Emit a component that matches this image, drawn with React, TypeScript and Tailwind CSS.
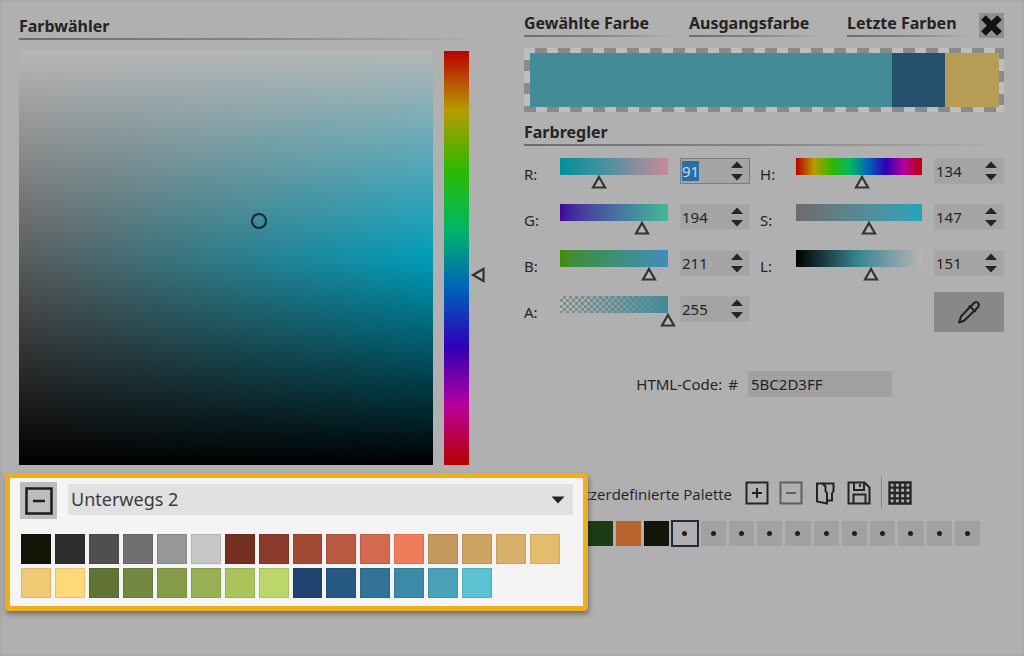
import { clsx } from 'clsx';
import type { ReactNode } from 'react';
import { useEffect, useRef, useState } from 'react';

const paletteColors = [
  '#141407', '#2d2d2d', '#4e4e4e', '#707070', '#979797', '#c6c6c6',
  '#732f21', '#8b3b2b', '#a14b36', '#b85a42', '#d26a50', '#f17c5b',
  '#c2985d', '#cda464', '#d8b06b', '#e4bc6f', '#f0ca75', '#ffd877',
  '#627336', '#748741', '#879c4b', '#99b055', '#aac35d', '#bdd669',
  '#20446f', '#265a84', '#327296', '#3d89a8', '#4aa1ba', '#5bc2d2',
];

const customColors: (string | null)[] = [
  '#1c3a1a', '#1c3a1a', '#1d3c15', '#b9642f', '#13150a',
  null, null, null, null, null, null, null, null, null, null, null,
];

const Heading = ({
  children,
  className,
}: {
  children: ReactNode;
  className?: string;
}) => (
  <h2 className={clsx('text-base font-bold leading-6', className)}>
    {children}
    <span className="block h-[2px] bg-linear-to-r from-[#6c6c6c] via-[#858585] to-[#b0b0b0]" />
  </h2>
);

const Slider = ({
  label,
  value,
  onChange,
  barClassName,
  autoSelect,
}: {
  label: string;
  value: number;
  onChange: (value: number) => void;
  barClassName: string;
  autoSelect?: boolean;
}) => {
  const inputRef = useRef<HTMLInputElement>(null);

  useEffect(() => {
    if (autoSelect) {
      inputRef.current?.focus();
      inputRef.current?.select();
    }
  }, [autoSelect]);

  const update = (next: number) => {
    onChange(Math.min(255, Math.max(0, next || 0)));
  };

  return (
    <div className="flex h-[26px] items-start">
      <label htmlFor={`value-${label}`} className="w-9 pt-1 leading-6">
        {label}:
      </label>
      <div className="relative mr-3 h-[26px] flex-1">
        <div className={clsx('h-[17px]', barClassName)} />
        <svg
          className="absolute top-4 h-4 w-[18px] -translate-x-1/2"
          style={{ left: `${(value / 255) * 100}%` }}
          viewBox="0 0 18 16"
        >
          <path
            d="M9 3 15 13.500H3z"
            fill="#b8b8b8"
            stroke="#333"
            strokeWidth="2.200"
          />
        </svg>
        <input
          type="range"
          aria-label={label}
          min={0}
          max={255}
          value={value}
          onChange={(e) => update(Number(e.target.value))}
          className="absolute inset-0 h-full w-full cursor-pointer opacity-0"
        />
      </div>
      <div
        className={clsx(
          'flex h-[26px] w-[70px] items-center border bg-[#a4a4a4]',
          autoSelect ? 'border-[#7c7c7c]' : 'border-[#a8a8a8]',
        )}
      >
        <input
          ref={inputRef}
          id={`value-${label}`}
          type="text"
          inputMode="numeric"
          value={value}
          onChange={(e) => update(Number(e.target.value))}
          className="h-[22px] w-0 flex-1 pb-px pl-px leading-5 outline-none selection:bg-[#286fa8] selection:text-[#c8d8e4]"
        />
        <div className="mr-[6px] flex flex-col gap-1">
          <button
            type="button"
            aria-label={`${label} +`}
            onClick={() => update(value + 1)}
          >
            <svg className="block h-2 w-3" viewBox="0 0 12 8">
              <path d="M6 .5 12 7H0z" fill="#242424" />
            </svg>
          </button>
          <button
            type="button"
            aria-label={`${label} -`}
            onClick={() => update(value - 1)}
          >
            <svg className="block h-2 w-3" viewBox="0 0 12 8">
              <path d="M6 7.500 12 1H0z" fill="#242424" />
            </svg>
          </button>
        </div>
      </div>
    </div>
  );
};

const IconButton = ({
  label,
  children,
  className,
}: {
  label: string;
  children: ReactNode;
  className?: string;
}) => (
  <button type="button" aria-label={label} className={clsx('h-6 w-6', className)}>
    <svg
      className="h-6 w-6"
      viewBox="0 0 24 24"
      fill="none"
      stroke="currentColor"
      strokeWidth="2"
    >
      {children}
    </svg>
  </button>
);

const ColorField = () => {
  const [hue, setHue] = useState(54);

  return (
    <section>
      <Heading className="pt-[3px]">Farbwähler</Heading>
      <div className="mt-[11px] flex">
        <div className="relative aspect-square flex-1 bg-[linear-gradient(to_bottom,#b6b6b6,#b6b6b600_50%,#00000000_50%,#000),linear-gradient(to_right,#5c5c5c,#009cb9)]">
          <span className="absolute left-[58%] top-[41%] h-4 w-4 -translate-x-1/2 -translate-y-1/2 rounded-full border-2 border-[#0d2a33]" />
        </div>
        <div className="relative ml-[11px] mr-[15px] w-[25px] bg-[linear-gradient(to_bottom,#b80000,#b89c00,#2fb800,#00b866,#0064b8,#2d00b8,#b8009c,#b80000)]">
          <svg
            className="absolute left-[26px] h-[18px] w-4 -translate-y-1/2"
            style={{ top: `${hue}%` }}
            viewBox="0 0 16 18"
          >
            <path
              d="M3 9 13.500 3v12z"
              fill="#b8b8b8"
              stroke="#333"
              strokeWidth="2.200"
            />
          </svg>
          <input
            type="range"
            aria-label="Farbton"
            min={0}
            max={100}
            value={hue}
            onChange={(e) => setHue(Number(e.target.value))}
            className="absolute inset-0 h-full w-full opacity-0 [direction:ltr] [writing-mode:vertical-lr]"
          />
        </div>
      </div>
    </section>
  );
};

const ColorSettings = () => {
  const [values, setValues] = useState({
    R: 91, G: 194, B: 211, A: 255, H: 134, S: 147, L: 151,
  });
  const [code, setCode] = useState('5BC2D3FF');

  const bind = (label: keyof typeof values) => ({
    label,
    value: values[label],
    onChange: (value: number) => setValues((v) => ({ ...v, [label]: value })),
  });

  return (
    <section>
      <div className="flex items-start">
        <Heading className="w-[150px]">Gewählte Farbe</Heading>
        <Heading className="ml-[15px] w-[132px]">Ausgangsfarbe</Heading>
        <Heading className="ml-[26px] w-[122px]">Letzte Farben</Heading>
        <button
          type="button"
          aria-label="Schließen"
          className="ml-auto mt-[2px] h-[25px] w-[25px] bg-[#8f8f8f]"
        >
          <svg className="h-[25px] w-[25px]" viewBox="0 0 25 25">
            <path
              d="M4.500 4.500 20.500 20.500M20.500 4.500 4.500 20.500"
              stroke="#121212"
              strokeWidth="6.500"
            />
          </svg>
        </button>
      </div>

      <div className="mt-[10px] flex h-16 bg-[conic-gradient(#8a8a8a_25%,#bebebe_0_50%,#8a8a8a_0_75%,#bebebe_0)] bg-size-[23px_23px] py-[5px] pl-[6px] pr-[5px]">
        <div className="flex-[362] bg-[#438b96]" />
        <div className="flex-[53] bg-[#25506c]" />
        <div className="flex-[54] bg-[#b79c56]" />
      </div>

      <Heading className="mt-2">Farbregler</Heading>

      <div className="mt-3 grid grid-cols-[226fr_244fr] gap-[10px]">
        <div className="flex flex-col gap-5">
          <Slider
            {...bind('R')}
            autoSelect
            barClassName="bg-[linear-gradient(to_right,#009098,#4292a0_38%,#c88a9a)]"
          />
          <Slider
            {...bind('G')}
            barClassName="bg-linear-to-r from-[#42009b] to-[#42b898]"
          />
          <Slider
            {...bind('B')}
            barClassName="bg-linear-to-r from-[#428c00] to-[#428cba]"
          />
          <Slider
            {...bind('A')}
            barClassName="bg-[linear-gradient(to_right,#438b9600,#438b96),conic-gradient(#8a8a8a_25%,#b8b8b8_0_50%,#8a8a8a_0_75%,#b8b8b8_0)] bg-size-[100%_100%,6px_6px]"
          />
        </div>
        <div>
          <div className="flex flex-col gap-5">
            <Slider
              {...bind('H')}
              barClassName="bg-[linear-gradient(to_right,#b80000,#b89c00,#2fb800,#00b866,#0064b8,#2d00b8,#b8009c,#b80000)]"
            />
            <Slider
              {...bind('S')}
              barClassName="bg-linear-to-r from-[#6c6c6c] to-[#1ea5bc]"
            />
            <Slider
              {...bind('L')}
              barClassName="bg-[linear-gradient(to_right,#000,#3a8694_50%,#b6b6b6)]"
            />
          </div>
          <button
            type="button"
            aria-label="Pipette"
            className="ml-auto mt-4 flex h-10 w-[70px] items-center justify-center bg-[#888]"
          >
            <svg
              className="h-7 w-7"
              viewBox="0 0 28 28"
              fill="none"
              stroke="#222"
              strokeWidth="2"
              strokeLinejoin="round"
            >
              <path d="M15 9 6 18.500 4 24.500 9.500 22.500 19 13" />
              <path d="M14 7.500 20.500 14" />
              <path d="M15.500 9 19 5c3-2.500 6.500 1 4 4L19.500 13" />
            </svg>
          </button>
        </div>
      </div>

      <div className="mt-[39px] flex items-center justify-end pr-28">
        <label htmlFor="html-code">
          HTML-Code:<span className="ml-[6px]">#</span>
        </label>
        <input
          id="html-code"
          type="text"
          value={code}
          onChange={(e) => setCode(e.target.value)}
          className="ml-[10px] h-[26px] w-36 bg-[#a1a1a1] px-[3px] pb-px"
        />
      </div>
    </section>
  );
};

const PalettePanel = () => (
  <section className="relative z-10 -ml-[14px] -mr-[104px] rounded-[4px] border-[5px] border-[#f0ae1c] bg-[#f4f4f4] px-[10px] pb-2 pt-1 shadow-[1px_3px_5px_#00000066]">
    <div className="flex items-center gap-[11px]">
      <button
        type="button"
        aria-label="Palette ausblenden"
        className="flex h-[37px] w-[37px] items-center justify-center bg-[#bdbdbd]"
      >
        <svg
          className="h-7 w-7"
          viewBox="0 0 28 28"
          fill="none"
          stroke="#1c1c1c"
          strokeWidth="2.500"
        >
          <path d="M1.500 1.500h25v25h-25zM8 14h12" />
        </svg>
      </button>
      <div className="relative mb-[2px] flex-1">
        <select
          aria-label="Palette"
          className="block h-[31px] w-full appearance-none bg-[#e1e1e1] pl-[3px] text-lg leading-[31px] text-[#3c3c3c]"
        >
          <option>Unterwegs 2</option>
        </select>
        <svg
          className="pointer-events-none absolute right-2 top-3 h-2 w-[14px]"
          viewBox="0 0 14 8"
        >
          <path d="M.5 .5h13L7 7.500z" fill="#242424" />
        </svg>
      </div>
    </div>
    <div className="mt-[15px] mr-[13px] grid grid-cols-16 gap-1 pl-px">
      {paletteColors.map((color) => (
        <button
          key={color}
          type="button"
          aria-label={color}
          className="h-[30px] border border-[#00000018]"
          style={{ backgroundColor: color }}
        />
      ))}
    </div>
  </section>
);

const CustomPalette = () => (
  <section className="pl-[7px] pt-2">
    <div className="flex h-6 items-center gap-[10px]">
      <h3 className="mr-[3px] flex w-[201px] justify-end whitespace-nowrap pt-[2px] font-[Open_Sans,sans-serif]">
        Benutzerdefinierte Palette
      </h3>
      <IconButton label="Hinzufügen">
        <path d="M1.500 1.500h21v21h-21zM7 12h10M12 7v10" />
      </IconButton>
      <IconButton label="Entfernen" className="text-[#5f5f5f]">
        <path d="M1.500 1.500h21v21h-21zM7 12h10" />
      </IconButton>
      <IconButton label="Öffnen">
        <path d="M10 3 12.500 5.500V10l1.500 2v10.500L4 20.500V2.500h16.500V10L19 12.500v7h-5" />
      </IconButton>
      <IconButton label="Speichern">
        <path d="M1.500 1.500h16l5 5v16h-21zM7 2v7h10V2M13 3v3M6.500 22v-8.500h12V22" />
      </IconButton>
      <div className="flex items-center gap-[6px]">
        <span className="h-8 w-px bg-[#858585]" />
        <IconButton label="Raster">
          <path
            d="M1.500 1.500h21v21h-21zM6.700 2v20M12 2v20M17.300 2v20M2 6.700h20M2 12h20M2 17.300h20"
            strokeWidth="2.300"
          />
        </IconButton>
      </div>
    </div>
    <div className="mr-[24px] mt-4 grid grid-cols-16 gap-[3px]">
      {customColors.map((color, i) => (
        <button
          key={i}
          type="button"
          aria-label={`Farbe ${i + 1}`}
          className={clsx(
            'flex h-[25px] items-center justify-center',
            i === 5
              ? 'outline-2 -outline-offset-1 outline-[#1b2c3c]'
              : 'bg-[#a1a1a1]',
          )}
          style={color ? { backgroundColor: color } : undefined}
        >
          {!color && <span className="h-[5px] w-[5px] rounded-full bg-[#1f1f1f]" />}
        </button>
      ))}
    </div>
  </section>
);

export default function App() {
  return (
    <main className="min-h-screen border-2 border-[#a8a8a8] bg-[#b0b0b0] pb-8 pl-[17px] pr-[18px] pt-[9px] font-['Noto_Sans',sans-serif] text-[15px] leading-6 text-[#242424]">
      <div className="grid grid-cols-[465fr_480fr] gap-x-10 gap-y-2">
        <ColorField />
        <ColorSettings />
        <PalettePanel />
        <CustomPalette />
      </div>
    </main>
  );
}
